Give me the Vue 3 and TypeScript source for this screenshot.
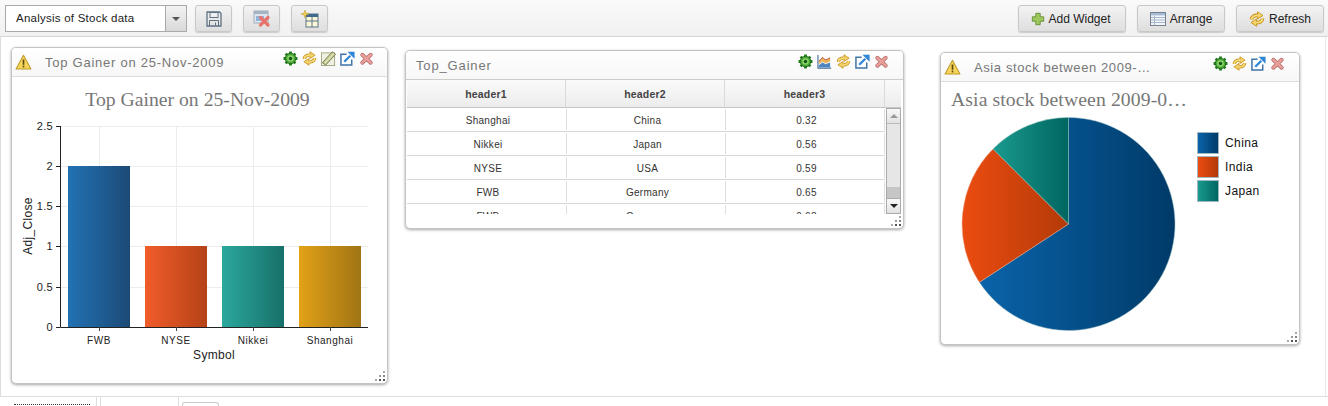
<script setup lang="ts">
const barTicks = [
  { label: '2.5', y: 126 }, { label: '2', y: 166 }, { label: '1.5', y: 206 },
  { label: '1', y: 246 }, { label: '0.5', y: 287 }, { label: '0', y: 327 },
]
const bars = [
  { name: 'FWB', x: 68, top: 166, fill: 'url(#gBlue)' },
  { name: 'NYSE', x: 145, top: 246, fill: 'url(#gOrange)' },
  { name: 'Nikkei', x: 222, top: 246, fill: 'url(#gTeal)' },
  { name: 'Shanghai', x: 299, top: 246, fill: 'url(#gGold)' },
]
const rows = [
  ['Shanghai', 'China', '0.32'], ['Nikkei', 'Japan', '0.56'], ['NYSE', 'USA', '0.59'],
  ['FWB', 'Germany', '0.65'], ['FWB', 'Germany', '0.68'],
]
const legend = [
  { name: 'China', cls: 'sw-blue' }, { name: 'India', cls: 'sw-orange' }, { name: 'Japan', cls: 'sw-teal' },
]
</script>

<template>
  <div class="page">
    <svg class="defs" width="0" height="0">
      <defs>
        <symbol id="i-warn" viewBox="0 0 16 16">
          <path d="M8 1.2 15 14.2H1Z" fill="#f7d65a" stroke="#c09a2a" stroke-linejoin="round" />
          <rect x="7.200" y="5.200" width="1.600" height="5" fill="#5c4a10" />
          <rect x="7.200" y="11" width="1.600" height="1.600" fill="#5c4a10" />
        </symbol>
        <symbol id="i-gear" viewBox="0 0 16 16">
          <path d="M8 .6v14.800M.6 8h14.800M2.800 2.800l10.400 10.400M13.200 2.800 2.800 13.200" stroke="#1f7a1a" stroke-width="3" />
          <circle cx="8" cy="8" r="5.600" fill="#4aa636" stroke="#1d6a18" />
          <circle cx="8" cy="8" r="3.500" fill="#8ad36a" />
          <circle cx="8" cy="8" r="1.800" fill="#12560f" />
        </symbol>
        <symbol id="i-sync" viewBox="0 0 16 16">
          <g fill="none" stroke="#c8921c" stroke-width="3.600">
            <path d="M2.500 8.500C2.500 6 5 4.200 8 4.400" />
            <path d="M13.500 7.500C13.500 10 11 11.800 8 11.600" />
          </g>
          <path d="M8.500 .8 14 4.500 8.500 8Z" fill="#f6d36a" stroke="#c8921c" stroke-width=".9" stroke-linejoin="round" />
          <path d="M7.500 15.200 2 11.500 7.500 8Z" fill="#f6d36a" stroke="#c8921c" stroke-width=".9" stroke-linejoin="round" />
          <g fill="none" stroke="#f8dc7a" stroke-width="1.900">
            <path d="M2.500 8.500C2.500 6 5 4.200 9 4.400" />
            <path d="M13.500 7.500C13.500 10 11 11.800 7 11.600" />
          </g>
        </symbol>
        <symbol id="i-edit" viewBox="0 0 16 16">
          <rect x=".5" y="2" width="14" height="13.500" fill="#f0f1e2" stroke="#a3a67c" />
          <path d="M1.500 12.500 12 .8 15.500 3.500 5 15Z" fill="#c6cb92" stroke="#777b4e" />
          <path d="M4 13 13.500 2.800" stroke="#f2f2d8" />
        </symbol>
        <symbol id="i-open" viewBox="0 0 16 16">
          <path d="M7 3.500H1v11.500h11.500V9" fill="#fff" stroke="#3f74a8" stroke-width="1.600" />
          <path d="M4.500 11.500 11 5" stroke="#2f86d6" stroke-width="2.400" />
          <path d="M8 .8H15.500V8.300Z" fill="#2f86d6" />
        </symbol>
        <symbol id="i-close" viewBox="0 0 16 16">
          <path d="M3.500 4 12.500 12.500M12.500 4 3.500 12.500" stroke="#b56b69" stroke-width="4.200" stroke-linecap="round" />
          <path d="M3.500 4 12.500 12.500M12.500 4 3.500 12.500" stroke="#e9a09b" stroke-width="2.600" stroke-linecap="round" />
        </symbol>
        <symbol id="i-chart" viewBox="0 0 16 16">
          <path d="M1 1v14h14" fill="#f2f6fb" stroke="#44709c" stroke-width="1.200" />
          <path d="M2 8 6 3.500l3 3 5-2.500v4l-5 2-3-2-4 3Z" fill="#eab65a" />
          <path d="M2 14v-2l4-3 3 2 5-2v5Z" fill="#4f86c0" />
          <path d="M2 8 6 3.500l3 3 5-2.500" fill="none" stroke="#c04a3a" />
        </symbol>
        <symbol id="i-save" viewBox="0 0 16 16">
          <path d="M1 1h12.500L15 2.500V15H1Z" fill="none" stroke="#5e7284" stroke-width="1.300" />
          <rect x="4" y="1.500" width="8" height="5" fill="#eef1f4" stroke="#5e7284" />
          <path d="M3.500 15V9.500h9V15M9.500 11.500v3" fill="none" stroke="#5e7284" />
        </symbol>
        <symbol id="i-delboard" viewBox="0 0 18 18">
          <rect x="1" y="1" width="14" height="12" fill="#dfe6ee" stroke="#a2aeba" />
          <rect x="1" y="1" width="14" height="3" fill="#a6b4c2" />
          <rect x="3" y="6" width="8" height="5" fill="#8fb4d8" />
          <path d="M7.500 7.500 15 15M15 7.500 7.500 15" stroke="#e8736c" stroke-width="3.200" stroke-linecap="round" />
        </symbol>
        <symbol id="i-newboard" viewBox="0 0 18 18">
          <rect x="5" y="4" width="12" height="13" fill="#fbf6d8" stroke="#5b7488" />
          <rect x="5" y="4" width="12" height="3" fill="#3f6a8c" />
          <path d="M5 11h12M11 7v10" stroke="#5b7488" />
          <path d="M4 0 5 3 8 4 5 5 4 8 3 5 0 4 3 3Z" fill="#f5d04e" stroke="#b9972c" stroke-width=".5" />
        </symbol>
        <symbol id="i-plus" viewBox="0 0 16 16">
          <path d="M5.500 1.500h5v4h4v5h-4v4h-5v-4h-4v-5h4Z" fill="#9fc85c" stroke="#5f8a30" />
        </symbol>
        <symbol id="i-arrange" viewBox="0 0 16 16">
          <rect x=".5" y="1.500" width="15" height="13" fill="#f2f5fa" stroke="#76808e" />
          <rect x="1" y="2" width="14" height="2.400" fill="#a8bbd6" />
          <path d="M1 6.500h14M1 9h14M1 11.500h14M4.500 4.500v10" stroke="#a8b6ca" />
        </symbol>
      </defs>
    </svg>

    <header class="toolbar">
      <div class="combo">
        <span class="combo-text">Analysis of Stock data</span>
        <span class="combo-arrow"><i class="caret"></i></span>
      </div>
      <button class="btn icon-btn"><svg width="16" height="16"><use href="#i-save" /></svg></button>
      <button class="btn icon-btn"><svg width="18" height="18"><use href="#i-delboard" /></svg></button>
      <button class="btn icon-btn"><svg width="18" height="18"><use href="#i-newboard" /></svg></button>
      <div class="spacer"></div>
      <button class="btn text-btn add"><svg width="14" height="14"><use href="#i-plus" /></svg>Add Widget</button>
      <button class="btn text-btn arr"><svg width="16" height="16"><use href="#i-arrange" /></svg>Arrange</button>
      <button class="btn text-btn ref"><svg width="16" height="16"><use href="#i-sync" /></svg>Refresh</button>
    </header>

    <main class="canvas">
      <section class="widget w1">
        <div class="w-head">
          <svg class="warn" width="17" height="17"><use href="#i-warn" /></svg>
          <span class="w-title t1">Top Gainer on 25-Nov-2009</span>
          <div class="tools">
            <svg width="15" height="15"><use href="#i-gear" /></svg>
            <svg width="15" height="15"><use href="#i-sync" /></svg>
            <svg width="15" height="15"><use href="#i-edit" /></svg>
            <svg width="15" height="15"><use href="#i-open" /></svg>
            <svg width="15" height="15"><use href="#i-close" /></svg>
          </div>
        </div>
        <svg class="chart" width="374" height="306" viewBox="12 77 374 306">
          <defs>
            <linearGradient id="gBlue"><stop offset="0" stop-color="#2272b4" /><stop offset="1" stop-color="#1c4a76" /></linearGradient>
            <linearGradient id="gOrange"><stop offset="0" stop-color="#f15c2a" /><stop offset="1" stop-color="#b54218" /></linearGradient>
            <linearGradient id="gTeal"><stop offset="0" stop-color="#2ba89c" /><stop offset="1" stop-color="#17706a" /></linearGradient>
            <linearGradient id="gGold"><stop offset="0" stop-color="#e2a117" /><stop offset="1" stop-color="#a07414" /></linearGradient>
          </defs>
          <text x="197.500" y="106" text-anchor="middle" class="c-title">Top Gainer on 25-Nov-2009</text>
          <g class="grid">
            <line v-for="t in barTicks" :key="t.label" x1="60" x2="368" :y1="t.y + 0.5" :y2="t.y + 0.5" />
            <line v-for="x in [99, 176, 253, 330]" :key="x" :x1="x + 0.5" :x2="x + 0.5" y1="126" y2="327" />
          </g>
          <rect v-for="b in bars" :key="b.name" :x="b.x" :y="b.top" width="62" :height="327 - b.top" :fill="b.fill" />
          <path d="M60.500 126V327.500H368" fill="none" stroke="#222" />
          <g v-for="t in barTicks" :key="'t' + t.label">
            <line x1="56" x2="60" :y1="t.y + 0.5" :y2="t.y + 0.5" stroke="#222" />
            <text x="53" :y="t.y + 4" text-anchor="end" class="c-tick">{{ t.label }}</text>
          </g>
          <g v-for="b in bars" :key="'l' + b.name">
            <line :x1="b.x + 31.500" :x2="b.x + 31.500" y1="327" y2="331" stroke="#444" />
            <text :x="b.x + 31" y="344" text-anchor="middle" class="c-cat">{{ b.name }}</text>
          </g>
          <text x="214" y="359" text-anchor="middle" class="c-axis">Symbol</text>
          <text transform="translate(32 226) rotate(-90)" text-anchor="middle" class="c-axis">Adj_Close</text>
        </svg>
        <i class="grip"></i>
      </section>

      <section class="widget w2">
        <div class="w-head h2">
          <span class="w-title t2">Top_Gainer</span>
          <div class="tools">
            <svg width="15" height="15"><use href="#i-gear" /></svg>
            <svg width="15" height="15"><use href="#i-chart" /></svg>
            <svg width="15" height="15"><use href="#i-sync" /></svg>
            <svg width="15" height="15"><use href="#i-open" /></svg>
            <svg width="15" height="15"><use href="#i-close" /></svg>
          </div>
        </div>
        <div class="table">
          <div class="thead">
            <span>header1</span><span>header2</span><span>header3</span><span></span>
          </div>
          <div class="tbody">
            <div class="rows">
              <div v-for="(r, i) in rows" :key="i" class="row">
                <span v-for="c in r" :key="c">{{ c }}</span>
              </div>
            </div>
            <div class="scroll">
              <div class="sb-btn"><i class="up"></i></div>
              <div class="sb-track"></div>
              <div class="sb-thumb"></div>
              <div class="sb-btn"><i class="down"></i></div>
            </div>
          </div>
        </div>
        <i class="grip"></i>
      </section>

      <section class="widget w3">
        <div class="w-head">
          <svg class="warn" width="17" height="17"><use href="#i-warn" /></svg>
          <span class="w-title t3">Asia stock between 2009-…</span>
          <div class="tools">
            <svg width="15" height="15"><use href="#i-gear" /></svg>
            <svg width="15" height="15"><use href="#i-sync" /></svg>
            <svg width="15" height="15"><use href="#i-open" /></svg>
            <svg width="15" height="15"><use href="#i-close" /></svg>
          </div>
        </div>
        <div class="c3-title">Asia stock between 2009-0…</div>
        <div class="pie-row">
          <svg class="pie" width="216" height="216" viewBox="961 117 216 216">
            <defs>
              <linearGradient id="pBlue" gradientUnits="userSpaceOnUse" x1="979" x2="1175" y1="0" y2="0"><stop offset="0" stop-color="#0a64aa" /><stop offset="1" stop-color="#003a68" /></linearGradient>
              <linearGradient id="pOrange" gradientUnits="userSpaceOnUse" x1="962" x2="1068" y1="0" y2="0"><stop offset="0" stop-color="#ec4c10" /><stop offset="1" stop-color="#b33a08" /></linearGradient>
              <linearGradient id="pTeal" gradientUnits="userSpaceOnUse" x1="993" x2="1068" y1="0" y2="0"><stop offset="0" stop-color="#1a9a8e" /><stop offset="1" stop-color="#006660" /></linearGradient>
            </defs>
            <path d="M1068.500 224V117.500A106.500 106.500 0 1 1 979.400 282.300Z" fill="url(#pBlue)" stroke="#9ec0c8" stroke-width=".5" />
            <path d="M1068.500 224 979.400 282.300A106.500 106.500 0 0 1 993 149Z" fill="url(#pOrange)" stroke="#e8a080" stroke-width=".5" />
            <path d="M1068.500 224 993 149A106.500 106.500 0 0 1 1068.500 117.500Z" fill="url(#pTeal)" stroke="#90c0c0" stroke-width=".5" />
          </svg>
          <ul class="legend">
            <li v-for="l in legend" :key="l.name"><i :class="['sw', l.cls]"></i>{{ l.name }}</li>
          </ul>
        </div>
        <i class="grip"></i>
      </section>
    </main>

    <footer class="tabs">
      <div class="tab-first"><i></i></div>
      <div class="tab-second"></div>
      <div class="tab-box"></div>
    </footer>
  </div>
</template>

<style>
html, body { margin: 0; background: #fff; overflow: hidden; }
</style>

<style scoped>
.page {
  width: 1328px; height: 406px; display: flex; flex-direction: column; overflow: hidden;
  font-family: "Liberation Sans", Arial, sans-serif; color: #333; background: #fff;
}
.defs { position: absolute; }
.toolbar {
  height: 37px; flex: none; display: flex; align-items: flex-start; padding: 5px 4px 0 5px; box-sizing: border-box;
  background: linear-gradient(#fafafa, #f1f1f1); border-bottom: 1px solid #d6d6d6;
}
.combo {
  width: 182px; height: 27px; box-sizing: border-box; display: flex; background: #fff; border: 1px solid #a9a9a9;
  color: #222;
}
.combo-text { flex: 1; line-height: 24px; padding-left: 10px; letter-spacing: .24px; font-size: 11.500px; }
.combo-arrow {
  width: 20px; border-left: 1px solid #a9a9a9; background: linear-gradient(#f2f2f2, #d9d9d9);
  display: flex; align-items: center; justify-content: center;
}
.caret { border: 4px solid transparent; border-top: 4px solid #555; border-bottom: 0; }
.btn {
  height: 27px; box-sizing: border-box; padding: 0; margin: 0; border: 1px solid #c8c8c8; border-radius: 3px;
  background: linear-gradient(#f3f3f3, #dedede); box-shadow: 0 1px 1px #ccc;
  display: flex; align-items: center; justify-content: center; font: 12px "Liberation Sans", Arial, sans-serif; color: #222;
}
.icon-btn { width: 37px; margin-left: 11px; }
.combo + .icon-btn { margin-left: 8px; }
.spacer { flex: 1; }
.text-btn { gap: 4px; margin-left: 11px; }
.add { width: 108px; gap: 3px; padding-right: 2px; }
.arr { width: 88px; }
.ref { width: 88px; }
.canvas {
  flex: 1; position: relative; background: #fff; border-left: 1px solid #ddd; border-right: 1px solid #e8e8e8; margin-right: 2px;
}
.widget {
  position: absolute; box-sizing: border-box; background: #fff; border: 1px solid #c4c4c4; border-radius: 5px;
  box-shadow: 0 1px 3px rgba(0,0,0,.35); display: flex; flex-direction: column; overflow: hidden;
}
.w1 { left: 10px; top: 10px; width: 377px; height: 337px; }
.w2 { left: 404px; top: 13px; width: 499px; height: 179px; }
.w3 { left: 939px; top: 15px; width: 360px; height: 293px; }
.w-head {
  height: 29px; flex: none; display: flex; align-items: center; box-sizing: border-box; position: relative;
  background: linear-gradient(#fff, #f7f7f7); border-bottom: 1px solid #ddd;
}
.h2 { border-bottom: 1px solid #ccc; }
.warn { margin-left: 3px; }
.w-title { color: #777; font-size: 13px; white-space: nowrap; }
.t1 { margin-left: 13px; letter-spacing: .75px; }
.t2 { margin-left: 10px; letter-spacing: .85px; }
.t3 { margin-left: 13px; letter-spacing: .6px; }
.tools { position: absolute; top: 3px; display: flex; gap: 4px; }
.tools svg { display: block; }
.w1 .tools { right: 13px; }
.w2 .tools { right: 14px; }
.w3 .tools { right: 14px; }
.chart { display: block; }
.c-title { font: 19.700px "Liberation Serif", serif; fill: #777; }
.c-tick { font: 11px "Liberation Sans", sans-serif; fill: #222; letter-spacing: .3px; }
.c-cat { font: 10px "Liberation Sans", sans-serif; fill: #222; letter-spacing: .55px; }
.c-axis { font: 12px "Liberation Sans", sans-serif; fill: #222; letter-spacing: .3px; }
.grid line { stroke: #ececec; }
.table { margin: 0 2px 0 1px; color: #333; }
.thead {
  display: grid; grid-template-columns: 159px 159px 160px 17px; height: 28px; box-sizing: border-box;
  background: linear-gradient(#fafafa, #ececec); border-bottom: 1px solid #c6c6c6;
}
.thead span {
  display: flex; align-items: center; justify-content: center; font-weight: bold; font-size: 10.500px;
  border-right: 1px solid #dadada; color: #444; letter-spacing: .2px;
}
.thead span:last-child { border-right: 0; }
.tbody { display: flex; height: 106px; overflow: hidden; }
.rows { width: 478px; flex: none; }
.row {
  display: grid; grid-template-columns: 160px 159px 159px; height: 24px; box-sizing: border-box;
  border-bottom: 1px solid #d8d8d8;
}
.row span {
  display: flex; align-items: center; justify-content: center; border-right: 1px solid #dedede; margin: 1px 0;
  padding: 2px 0 0 3px; font-size: 10px; letter-spacing: .3px; color: #333;
}
.scroll {
  margin-left: 1px; width: 15px; height: 106px; box-sizing: border-box; border: 1px solid #aaa; background: #e6e6e6;
  display: flex; flex-direction: column;
}
.sb-btn {
  height: 14px; flex: none; background: linear-gradient(#f8f8f8, #e2e2e2); display: flex; align-items: center; justify-content: center; border-bottom: 1px solid #bbb;
}
.sb-btn:last-child { border-bottom: 0; border-top: 1px solid #aaa; }
.sb-track { flex: 1; }
.sb-thumb { height: 11px; background: #c6c6c6; flex: none; }
.up { border: 4px solid transparent; border-bottom: 4px solid #999; border-top: 0; }
.down { border: 4px solid transparent; border-top: 4px solid #222; border-bottom: 0; }
.c3-title {
  font: 19.700px "Liberation Serif", serif; color: #777; letter-spacing: .1px; padding: 6px 0 0 10px; line-height: 22px; height: 22px; white-space: nowrap;
}
.pie-row { position: relative; flex: 1; display: flex; padding: 7px 0 0 20px; }
.pie { display: block; flex: none; }
.legend {
  list-style: none; margin: 15px 0 0 20px; padding: 0; display: flex; flex-direction: column; gap: 2px;
  font-size: 12px; color: #111; letter-spacing: .4px;
}
.legend li { height: 22px; display: flex; align-items: center; gap: 6px; }
.sw { width: 22px; height: 22px; box-sizing: border-box; border: 1px solid #9fb8c4; display: block; }
.sw-blue { background: linear-gradient(90deg, #0a64aa, #003a68); }
.sw-orange { background: linear-gradient(90deg, #ec4c10, #b33a08); }
.sw-teal { background: linear-gradient(90deg, #1a9a8e, #006660); }
.grip {
  position: absolute; right: 2px; bottom: 2px; width: 10px; height: 10px;
  background:
    radial-gradient(circle at 1px 1px, #555 1px, transparent 1.100px) 8px 8px / 2px 2px no-repeat,
    radial-gradient(circle at 1px 1px, #555 1px, transparent 1.100px) 4px 8px / 2px 2px no-repeat,
    radial-gradient(circle at 1px 1px, #888 1px, transparent 1.100px) 8px 4px / 2px 2px no-repeat,
    radial-gradient(circle at 1px 1px, #aaa 1px, transparent 1.100px) 0 8px / 2px 2px no-repeat,
    radial-gradient(circle at 1px 1px, #aaa 1px, transparent 1.100px) 8px 0 / 2px 2px no-repeat,
    radial-gradient(circle at 1px 1px, #999 1px, transparent 1.100px) 4px 4px / 2px 2px no-repeat;
}
.tabs {
  height: 10px; flex: none; box-sizing: border-box; border-top: 1px solid #ddd; display: flex; background: #fff;
}
.tab-first { width: 97px; border-right: 1px solid #ddd; box-sizing: border-box; padding: 7px 0 0 14px; }
.tab-first i { display: block; width: 76px; border-top: 1px dotted #333; }
.tab-second { width: 79px; margin-left: 3px; border-left: 1px solid #ddd; border-right: 1px solid #ddd; box-sizing: border-box; }
.tab-box { width: 37px; margin: 5px 0 0 3px; border: 1px solid #ccc; border-bottom: 0; border-radius: 3px 3px 0 0; box-sizing: border-box; }
</style>
